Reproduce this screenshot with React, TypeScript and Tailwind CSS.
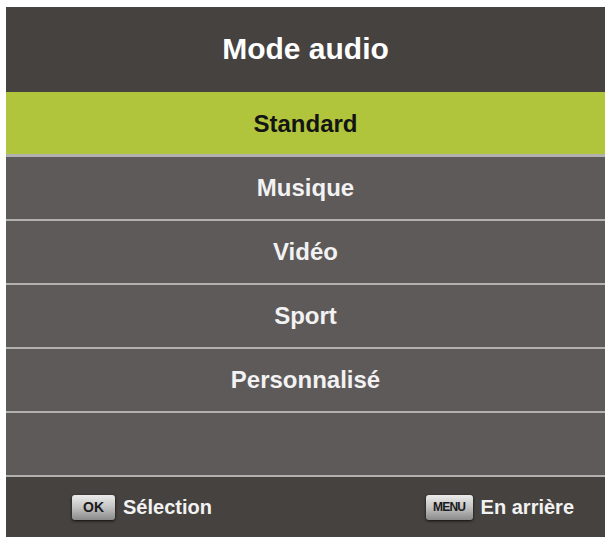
const items = ["Standard", "Musique", "Vidéo", "Sport", "Personnalisé", ""];

function KeyCap({ label, wide }: { label: string; wide?: boolean }) {
  return (
    <span
      className={`flex h-[25px] items-center justify-center rounded-[3px] bg-gradient-to-b from-[#ececec] via-[#c2c2c2] to-[#8a8a8a] shadow-[0_1px_3px_rgba(0,0,0,0.8)] font-bold text-[#1a1a1a] ${
        wide ? "w-[47px] scale-x-100 text-[12px] tracking-[-0.8px]" : "w-[43px] text-[14px]"
      }`}
    >
      {label}
    </span>
  );
}

export default function App() {
  return (
    <div className="h-[540px] w-[612px] bg-white pl-[6px] pt-[7px] font-['Liberation_Sans',Arial,sans-serif]">
      <div className="flex w-[599px] flex-col bg-[#b3b1b0]">
        <div className="flex h-[85px] items-center justify-center bg-[#46423f] pb-[3px] text-[30px] font-bold text-white">
          Mode audio
        </div>
        <div className="flex flex-col gap-[2px]">
          {items.map((item, i) => (
            <div
              key={i}
              className={`flex h-[62px] items-center justify-center text-[24px] font-bold ${
                i === 0
                  ? "mb-[1px] bg-[#b0c43c] pt-[2px] text-[#141414]"
                  : "bg-[#5e5a5a] text-[#f2f2f2]"
              } ${i === items.length - 1 ? "mb-[2px]" : ""}`}
            >
              {item}
            </div>
          ))}
        </div>
        <div className="flex h-[60px] items-center justify-between bg-[#46423f] pl-[66px] pr-[31px] text-[20px] font-bold text-[#f2f2f2]">
          <div className="flex items-center gap-[8px]">
            <KeyCap label="OK" />
            <span>Sélection</span>
          </div>
          <div className="flex items-center gap-[8px]">
            <KeyCap label="MENU" wide />
            <span>En arrière</span>
          </div>
        </div>
      </div>
    </div>
  );
}
